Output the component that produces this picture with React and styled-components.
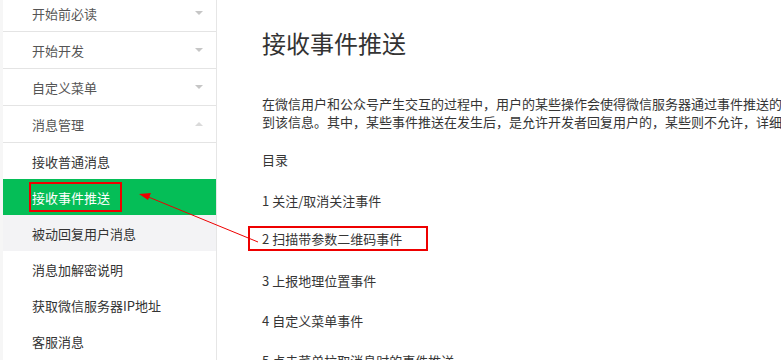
import React from 'react';
import styled, { createGlobalStyle } from 'styled-components';

const GREEN = '#05be57';
const RED = '#ee0000';

const Global = createGlobalStyle`
  html, body {
    margin: 0;
    padding: 0;
    background: #fff;
    overflow: hidden;
  }
  body {
    font-family: "Noto Sans CJK SC", "Liberation Sans", sans-serif;
    font-size: 13px;
    color: #333;
  }
`;

const Page = styled.div`
  position: relative;
  display: flex;
  width: 781px;
  height: 360px;
  overflow: hidden;
  background: #f6f6f6;
`;

const Side = styled.nav`
  flex: 0 0 213px;
  margin-left: 3px;
  background: #fff;
  border-right: 1px solid #e6e6e6;
`;

const SideList = styled.div`
  margin-top: -5px;
`;

const Group = styled.div`
  display: flex;
  align-items: center;
  justify-content: space-between;
  height: 36px;
  padding: 0 13px 0 29px;
  border-bottom: 1px solid #e4e4e4;
  color: #555;
`;

const Caret = styled.span`
  width: 0;
  height: 0;
  border-left: 4px solid transparent;
  border-right: 4px solid transparent;
  ${p => p.$up
    ? `border-bottom: 4px solid #dadada;`
    : `border-top: 4px solid #c6c6c6;`}
`;

const Sub = styled.div`
  display: flex;
  align-items: center;
  height: 36px;
  padding-left: 29px;
  color: ${p => (p.$active ? '#fff' : '#333')};
  background: ${p => (p.$active ? GREEN : p.$hover ? '#f3f3f5' : '#fff')};
`;

const SideMark = styled.span`
  display: inline-flex;
  align-items: center;
  height: 26px;
  padding: 0 10px 0 1px;
  border: 2px solid ${RED};
  margin-left: -3px;
`;

const Main = styled.main`
  flex: 1;
  background: #fff;
  padding: 27px 0 0 45px;
  color: #353535;
  white-space: nowrap;
  overflow: hidden;
`;

const Title = styled.h1`
  margin: 0;
  font-size: 24px;
  line-height: 32px;
  font-weight: 400;
  color: #333;
`;

const Para = styled.p`
  margin: 36px 0 0;
  line-height: 18px;
`;

const Toc = styled.div`
  margin-top: 20px;
  line-height: 18px;
`;

const Items = styled.ol`
  list-style: none;
  margin: 12px 0 0;
  padding: 0;
`;

const Item = styled.li`
  height: 40px;
  line-height: 40px;
`;

const ItemMark = styled.span`
  display: inline-block;
  line-height: 17px;
  padding: 2px 24px 2px 12px;
  margin-left: -14px;
  border: 2px solid ${RED};
  position: relative;
  top: -2px;
`;

const Overlay = styled.svg`
  position: absolute;
  left: 0;
  top: 0;
  pointer-events: none;
`;

const groups = ['开始前必读', '开始开发', '自定义菜单'];

const subs = [
  '接收普通消息',
  '接收事件推送',
  '被动回复用户消息',
  '消息加解密说明',
  '获取微信服务器IP地址',
  '客服消息',
];

const toc = [
  '1 关注/取消关注事件',
  '2 扫描带参数二维码事件',
  '3 上报地理位置事件',
  '4 自定义菜单事件',
  '5 点击菜单拉取消息时的事件推送',
];

export default function App() {
  return (
    <>
      <Global />
      <Page>
        <Side>
          <SideList>
            {groups.map(g => (
              <Group key={g}>
                {g}
                <Caret />
              </Group>
            ))}
            <Group>
              消息管理
              <Caret $up />
            </Group>
            {subs.map((s, i) => (
              <Sub key={s} $active={i === 1} $hover={i === 2}>
                {i === 1 ? <SideMark>{s}</SideMark> : s}
              </Sub>
            ))}
          </SideList>
        </Side>
        <Main>
          <Title>接收事件推送</Title>
          <Para>
            在微信用户和公众号产生交互的过程中，用户的某些操作会使得微信服务器通过事件推送的形式通知到开发者在开发者中心处设置的服务器地址，从而开发者可以获取
            <br />
            到该信息。其中，某些事件推送在发生后，是允许开发者回复用户的，某些则不允许，详细内容如下：
          </Para>
          <Toc>目录</Toc>
          <Items>
            {toc.map((t, i) => (
              <Item key={t}>{i === 1 ? <ItemMark>{t}</ItemMark> : t}</Item>
            ))}
          </Items>
        </Main>
        <Overlay width="781" height="360" viewBox="0 0 781 360">
          <line x1="258" y1="242" x2="146" y2="196" stroke={RED} strokeWidth="1" />
          <polygon points="139,194 151,193 148,200" fill={RED} />
        </Overlay>
      </Page>
    </>
  );
}
